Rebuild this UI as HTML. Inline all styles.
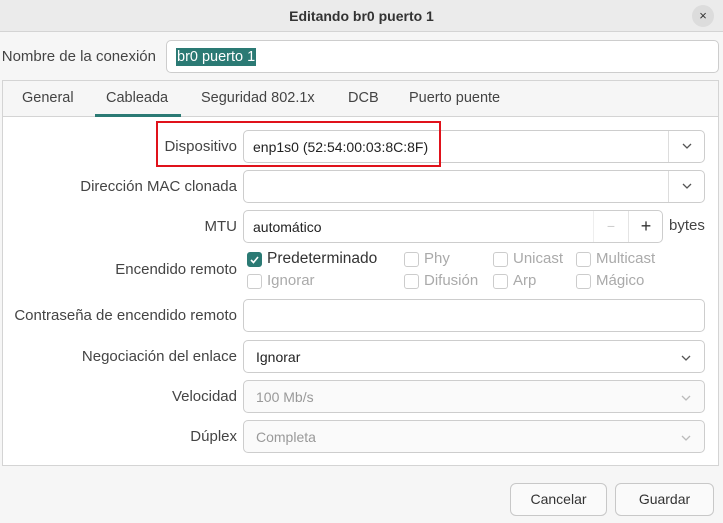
<!DOCTYPE html><html><head><style>
*{box-sizing:border-box;margin:0;padding:0}
body{width:723px;height:523px;background:#f6f6f6;font-family:"Liberation Sans",sans-serif;font-size:14px;color:#333;position:relative;overflow:hidden}
.a{position:absolute}
.hdr{left:0;top:0;width:723px;height:32px;background:#ebebeb;border-bottom:1px solid #d4d4d4;text-align:center;line-height:32px;font-weight:bold;font-size:14px;color:#333}
.x{right:9px;top:5px;width:22px;height:22px;border-radius:50%;background:#dcdcdc;text-align:center;line-height:22px;font-size:13px;font-weight:normal}
.ent{background:#fff;border:1px solid #cdcdcd;border-radius:5px;height:33px}
.lbl{text-align:right;line-height:33px;color:#444;font-size:15px}
.t{line-height:33px;padding-left:9px;color:#222}
.dis{background:#fafafa;color:#999}
.arr{position:absolute;right:0;top:0;width:36px;height:31px;border-left:1px solid #ddd}
.arr svg{position:absolute;left:13px;top:12px}
.cb{width:15px;height:15px;border:1px solid #ccc;border-radius:3px;background:#fff}
.ct{color:#aaa;font-size:15px}
.tab{color:#444;font-size:14.5px}
.btn{border:1px solid #c8c8c8;border-radius:6px;background:#fafafa;height:33px;text-align:center;line-height:31px;color:#333}
</style></head><body>
<div class="a hdr">Editando br0 puerto 1</div>
<div class="a x">×</div>
<div class="a lbl" style="left:0;top:40px;width:156px">Nombre de la conexión</div>
<div class="a ent" style="left:166px;top:40px;width:553px"><span style="position:absolute;left:9px;top:7px;background:#2b7a74;color:#fff;line-height:18px;padding:0 1px;font-size:14.5px">br0 puerto 1</span></div>
<div class="a" style="left:2px;top:80px;width:717px;height:386px;border:1px solid #d4d4d4;background:#fff"></div>
<div class="a" style="left:3px;top:81px;width:715px;height:36px;background:#f6f6f6;border-bottom:1px solid #d4d4d4"></div>
<div class="a tab" style="left:22px;top:90px">General</div>
<div class="a tab" style="left:106px;top:90px">Cableada</div>
<div class="a" style="left:95px;top:114px;width:86px;height:3px;background:#2b7a74"></div>
<div class="a tab" style="left:201px;top:90px">Seguridad 802.1x</div>
<div class="a tab" style="left:348px;top:90px">DCB</div>
<div class="a tab" style="left:409px;top:90px">Puerto puente</div>

<div class="a lbl" style="left:0;top:130px;width:237px">Dispositivo</div>
<div class="a ent" style="left:243px;top:130px;width:462px"><div class="t">enp1s0 (52:54:00:03:8C:8F)</div><div class="arr"><svg width="10" height="6"><path d="M1 1L5 5L9 1" stroke="#555" fill="none" stroke-width="1.3"/></svg></div></div>
<div class="a" style="left:156px;top:121px;width:285px;height:46px;border:2px solid #e0121b"></div>

<div class="a lbl" style="left:0;top:170px;width:237px">Dirección MAC clonada</div>
<div class="a ent" style="left:243px;top:170px;width:462px"><div class="arr"><svg width="10" height="6"><path d="M1 1L5 5L9 1" stroke="#555" fill="none" stroke-width="1.3"/></svg></div></div>

<div class="a lbl" style="left:0;top:210px;width:237px">MTU</div>
<div class="a ent" style="left:243px;top:210px;width:420px"><div class="t">automático</div>
<div class="a" style="left:349px;top:0;width:35px;height:31px;border-left:1px solid #eee;text-align:center;line-height:31px;color:#ccc">−</div>
<div class="a" style="left:384px;top:0;width:35px;height:31px;border-left:1px solid #e4e4e4;text-align:center;line-height:31px;font-size:18px;color:#333">+</div></div>
<div class="a" style="left:669px;top:217px;color:#444;font-size:15px">bytes</div>

<div class="a lbl" style="left:0;top:253px;width:237px">Encendido remoto</div>
<div class="a cb" style="left:247px;top:252px;background:#2b7a74;border-color:#2b7a74"><svg width="13" height="13" style="position:absolute;left:0;top:0"><path d="M3 7L5.5 9.5L10 4" stroke="#fff" fill="none" stroke-width="1.6"/></svg></div>
<div class="a" style="left:267px;top:250px;color:#333;font-size:15.5px">Predeterminado</div>
<div class="a cb" style="left:404px;top:252px"></div><div class="a ct" style="left:424px;top:250px">Phy</div>
<div class="a cb" style="left:493px;top:252px"></div><div class="a ct" style="left:513px;top:250px">Unicast</div>
<div class="a cb" style="left:576px;top:252px"></div><div class="a ct" style="left:596px;top:250px">Multicast</div>
<div class="a cb" style="left:247px;top:274px"></div><div class="a ct" style="left:267px;top:272px">Ignorar</div>
<div class="a cb" style="left:404px;top:274px"></div><div class="a ct" style="left:424px;top:272px">Difusión</div>
<div class="a cb" style="left:493px;top:274px"></div><div class="a ct" style="left:513px;top:272px">Arp</div>
<div class="a cb" style="left:576px;top:274px"></div><div class="a ct" style="left:596px;top:272px">Mágico</div>

<div class="a lbl" style="left:0;top:299px;width:237px">Contraseña de encendido remoto</div>
<div class="a ent" style="left:243px;top:299px;width:462px"></div>

<div class="a lbl" style="left:0;top:340px;width:237px">Negociación del enlace</div>
<div class="a ent" style="left:243px;top:340px;width:462px"><div class="t" style="padding-left:12px">Ignorar</div><svg width="10" height="6" style="position:absolute;right:13px;top:14px"><path d="M1 1L5 5L9 1" stroke="#555" fill="none" stroke-width="1.3"/></svg></div>

<div class="a lbl" style="left:0;top:380px;width:237px">Velocidad</div>
<div class="a ent dis" style="left:243px;top:380px;width:462px"><div class="t" style="padding-left:12px;color:#999">100 Mb/s</div><svg width="10" height="6" style="position:absolute;right:13px;top:14px"><path d="M1 1L5 5L9 1" stroke="#bbb" fill="none" stroke-width="1.3"/></svg></div>

<div class="a lbl" style="left:0;top:420px;width:237px">Dúplex</div>
<div class="a ent dis" style="left:243px;top:420px;width:462px"><div class="t" style="padding-left:12px;color:#999">Completa</div><svg width="10" height="6" style="position:absolute;right:13px;top:14px"><path d="M1 1L5 5L9 1" stroke="#bbb" fill="none" stroke-width="1.3"/></svg></div>

<div class="a btn" style="left:510px;top:483px;width:97px">Cancelar</div>
<div class="a btn" style="left:615px;top:483px;width:99px">Guardar</div>
</body></html>
